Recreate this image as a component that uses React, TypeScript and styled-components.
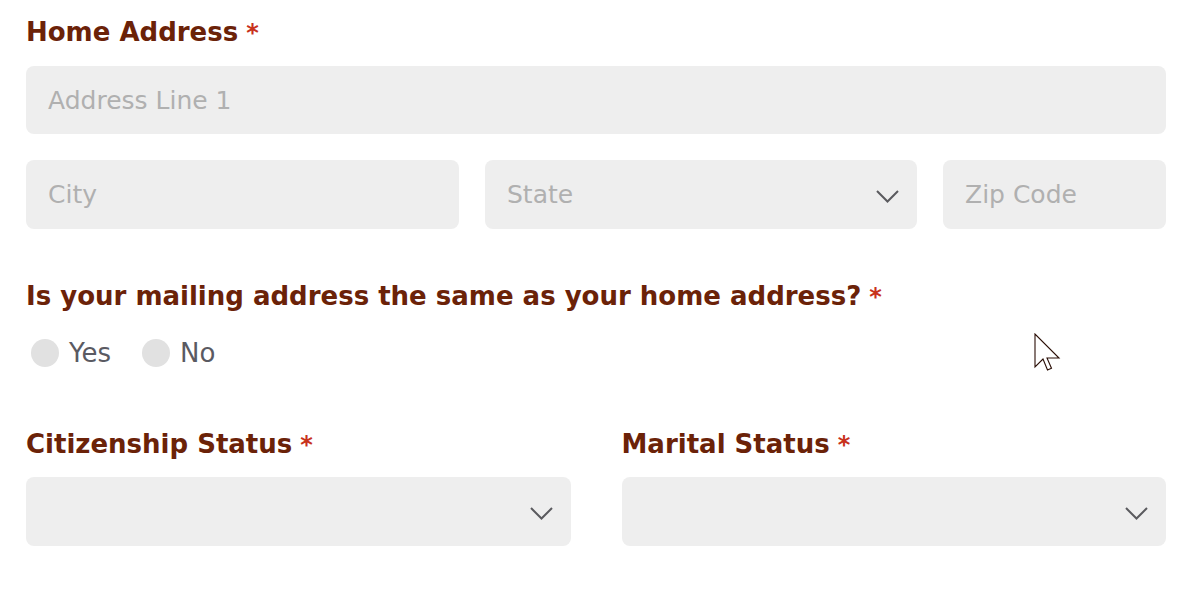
import React from "react";
import styled, { createGlobalStyle } from "styled-components";

const Global = createGlobalStyle`
  html, body { margin: 0; padding: 0; background: #ffffff; }
  body { font-family: "DejaVu Sans", Verdana, sans-serif; }
`;

const Page = styled.div`
  position: relative;
  width: 1200px;
  height: 600px;
  box-sizing: border-box;
  padding: 14px 34px 0 26px;
  display: flex;
  flex-direction: column;
`;

const Label = styled.div<{ $mt?: number }>`
  margin-top: ${(p) => p.$mt ?? 0}px;
  font-family: "DejaVu Sans", Verdana, sans-serif;
  font-weight: 700;
  font-size: 26px;
  line-height: 36px;
  color: #6b2208;
  display: flex;
  align-items: baseline;
  gap: 8px;
  white-space: nowrap;
`;

const Star = styled.span`
  color: #c8321c;
  font-size: 24px;
`;

const Field = styled.div<{ $h?: number }>`
  position: relative;
  height: ${(p) => p.$h ?? 69}px;
  background: #eeeeee;
  border-radius: 8px;
  display: flex;
  align-items: center;
  padding: 0 22px;
  box-sizing: border-box;
  min-width: 0;
`;

const Placeholder = styled.span`
  font-family: "DejaVu Sans", Verdana, sans-serif;
  font-size: 25px;
  color: #b0b0b0;
  white-space: nowrap;
`;

const Chevron = styled.svg`
  position: absolute;
  right: 18px;
  top: 50%;
  margin-top: -5px;
  width: 23px;
  height: 13px;
`;

const Stack = styled.div<{ $mt?: number }>`
  margin-top: ${(p) => p.$mt ?? 0}px;
`;

const AddressRow = styled.div`
  margin-top: 26px;
  display: grid;
  grid-template-columns: 433px 432px 1fr;
  gap: 26px;
`;

const Radios = styled.div`
  margin-top: 23px;
  display: flex;
  align-items: center;
  gap: 31px;
  padding-left: 5px;
`;

const RadioOption = styled.label`
  display: flex;
  align-items: center;
  gap: 10px;
`;

const RadioDot = styled.span`
  width: 28px;
  height: 28px;
  border-radius: 50%;
  background: #e1e1e1;
  flex: none;
`;

const RadioText = styled.span`
  font-family: "DejaVu Sans", Verdana, sans-serif;
  font-size: 26px;
  line-height: 30px;
  color: #5a5a62;
`;

const StatusRow = styled.div`
  margin-top: 58px;
  display: grid;
  grid-template-columns: 1fr 1fr;
  gap: 51px;
`;

const Column = styled.div`
  display: flex;
  flex-direction: column;
  gap: 14px;
`;

const Cursor = styled.svg`
  position: absolute;
  left: 1034px;
  top: 333px;
  width: 28px;
  height: 40px;
`;

const ChevronIcon = () => (
  <Chevron viewBox="0 0 23 13">
    <path d="M1 1 L11.5 11.5 L22 1" fill="none" stroke="#5a5a5e" strokeWidth="2" />
  </Chevron>
);

const Required = ({ children, mt }: { children: React.ReactNode; mt?: number }) => (
  <Label $mt={mt}>
    {children}
    <Star>*</Star>
  </Label>
);

export default function App() {
  return (
    <>
      <Global />
      <Page>
        <Required>Home Address</Required>
        <Stack $mt={15}>
          <Field $h={68}>
            <Placeholder>Address Line 1</Placeholder>
          </Field>
        </Stack>
        <AddressRow>
          <Field>
            <Placeholder>City</Placeholder>
          </Field>
          <Field>
            <Placeholder>State</Placeholder>
            <ChevronIcon />
          </Field>
          <Field>
            <Placeholder>Zip Code</Placeholder>
          </Field>
        </AddressRow>
        <Required mt={49}>Is your mailing address the same as your home address?</Required>
        <Radios>
          <RadioOption>
            <RadioDot />
            <RadioText>Yes</RadioText>
          </RadioOption>
          <RadioOption>
            <RadioDot />
            <RadioText>No</RadioText>
          </RadioOption>
        </Radios>
        <StatusRow>
          <Column>
            <Required>Citizenship Status</Required>
            <Field>
              <ChevronIcon />
            </Field>
          </Column>
          <Column>
            <Required>Marital Status</Required>
            <Field>
              <ChevronIcon />
            </Field>
          </Column>
        </StatusRow>
        <Cursor viewBox="0 0 28 40">
          <path
            d="M1 1 L1 34 L9 26 L13.5 37 L17.5 35.3 L13 25 L25 25 Z"
            fill="#ffffff"
            stroke="#2a0e06"
            strokeWidth="1.1"
            strokeLinejoin="miter"
          />
        </Cursor>
      </Page>
    </>
  );
}
